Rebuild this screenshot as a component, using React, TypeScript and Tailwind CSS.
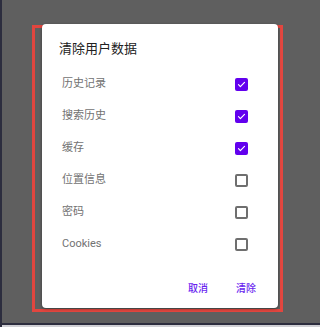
import React from 'react';

const items = [
  { label: '历史记录', checked: true },
  { label: '搜索历史', checked: true },
  { label: '缓存', checked: true },
  { label: '位置信息', checked: false },
  { label: '密码', checked: false },
  { label: 'Cookies', checked: false },
];

const Box: React.FC<{ checked: boolean }> = ({ checked }) =>
  checked ? (
    <div className="w-[13px] h-[13px] rounded-[2px] bg-[#6200ee] flex items-center justify-center">
      <svg width="9" height="9" viewBox="0 0 24 24" fill="none">
        <path d="M4 12.5l5 5L20 6.5" stroke="#fff" strokeWidth="3.2" strokeLinecap="round" strokeLinejoin="round" />
      </svg>
    </div>
  ) : (
    <div className="w-[13px] h-[13px] rounded-[2px] border-2 border-[#6f6f6f]" />
  );

export default function App() {
  return (
    <div
      className="relative w-[320px] h-[327px] overflow-hidden bg-[#5f5f5f] border-l-2 border-[#2c2d3e]"
      style={{ fontFamily: '"Roboto", "Noto Sans CJK SC", sans-serif' }}
    >
      {/* highlight frame */}
      <div className="absolute left-[30px] top-[25px] w-[251px] h-[287px] border-[3px] border-[#e2463f]" />

      <div className="relative ml-[40px] mt-[24px] w-[236px] h-[284px] bg-white rounded-[4px] shadow-[0_1px_3px_rgba(0,0,0,0.4)] flex flex-col">
        <div className="pl-[17px] pt-[16px] text-[13px] leading-[18px] text-[#212121]">清除用户数据</div>
        <div className="mt-[10px] flex flex-col">
          {items.map((it) => (
            <div key={it.label} className="h-[32px] flex items-center justify-between pl-[20px] pr-[30px]">
              <span className="text-[11px] text-[#727272]">{it.label}</span>
              <Box checked={it.checked} />
            </div>
          ))}
        </div>
        <div className="mt-[14px] h-[28px] flex items-center justify-end gap-[28px] pr-[22px] text-[10px] font-medium text-[#6a1ff0]">
          <span>取消</span>
          <span>清除</span>
        </div>
      </div>

      {/* bottom strip */}
      <div className="absolute left-0 right-0 top-[323px] h-[2px] bg-[#2c2d3e]" />
      <div className="absolute left-0 right-0 top-[325px] h-[2px] bg-[#cfcfd4]" />
    </div>
  );
}
